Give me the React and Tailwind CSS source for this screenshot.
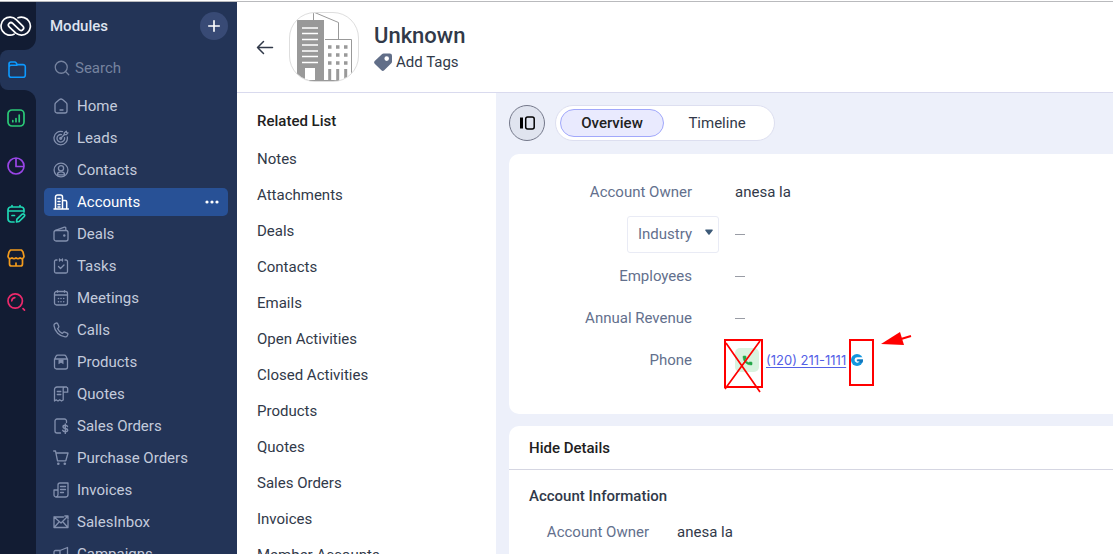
import { Phone, Plus, Search } from 'lucide-react'

const MODULES = [
  { name: 'Home', icon: HomeIcon },
  { name: 'Leads', icon: LeadsIcon },
  { name: 'Contacts', icon: ContactsIcon },
  { name: 'Accounts', icon: AccountsIcon },
  { name: 'Deals', icon: DealsIcon },
  { name: 'Tasks', icon: TasksIcon },
  { name: 'Meetings', icon: MeetingsIcon },
  { name: 'Calls', icon: CallsIcon },
  { name: 'Products', icon: ProductsIcon },
  { name: 'Quotes', icon: QuotesIcon },
  { name: 'Sales Orders', icon: SalesOrdersIcon },
  { name: 'Purchase Orders', icon: CartIcon },
  { name: 'Invoices', icon: InvoicesIcon },
  { name: 'SalesInbox', icon: InboxIcon },
  { name: 'Campaigns', icon: CampaignsIcon },
]

const RELATED = [
  'Notes', 'Attachments', 'Deals', 'Contacts', 'Emails', 'Open Activities',
  'Closed Activities', 'Products', 'Quotes', 'Sales Orders', 'Invoices', 'Member Accounts',
]

export default function App() {
  return (
    <div className="h-screen overflow-hidden flex flex-col bg-white font-['Roboto',sans-serif] text-[15px] leading-5 text-[#313949]">
      <div className="shrink-0 h-[2px] border-b border-[#b9babd]" />
      <div className="flex-1 min-h-0 flex">
        <Rail />
        <Sidebar />
        <div className="flex-1 min-w-0 flex flex-col">
          <RecordHeader />
          <div className="flex-1 min-h-0 flex">
            <RelatedList />
            <Details />
          </div>
        </div>
      </div>
    </div>
  )
}

function Rail() {
  return (
    <nav aria-label="Teamspaces" className="w-9 shrink-0 flex flex-col bg-[#233457]">
      <div className="h-12 pr-1 bg-[#121c33] rounded-br-xl flex items-center justify-center">
        <svg className="w-8 h-6" viewBox="0 0 32 24" fill="none" stroke="#fff" strokeWidth="1.7" strokeLinecap="round" strokeLinejoin="round">
          <path d="M14 20.200A9 9 0 1 1 16.200 5.600l6.600 6.500a2.500 2.500 0 0 1-3.500 3.600l-6.600-6.400a2.500 2.500 0 0 0-3.500 3.600l6.600 6.300A9 9 0 1 0 18 3.800" />
        </svg>
      </div>
      <div className="h-10 bg-[#121c33]">
        <button title="CRM" className="w-full h-full pr-[2px] rounded-l-lg bg-[#233457] flex items-center justify-center">
          <svg className="w-5 h-5" viewBox="0 0 20 20" fill="none" stroke="#0d99ff" strokeWidth="1.6" strokeLinejoin="round">
            <path d="M2 7.500V4a2 2 0 0 1 2-2h3.600c.8 0 1.200.3 1.600.9l1 1.700H16A2.300 2.300 0 0 1 18.300 7v8a2.300 2.300 0 0 1-2.300 2.300H4.300A2.300 2.300 0 0 1 2 15V7.500a2 2 0 0 1 2-2.300h6.500" />
          </svg>
        </button>
      </div>
      <div className="flex-1 bg-[#121c33] rounded-tr-xl flex flex-col items-center pt-[18px] pr-1">
        <button title="Reports" className="h-5">
          <svg className="w-5 h-5" viewBox="0 0 20 20" fill="none" stroke="#2bc977" strokeWidth="1.700" strokeLinecap="round">
            <rect x="2" y="2" width="16" height="16" rx="4" />
            <path d="M6.800 13.700v-1M10 13.700V10.500M13.200 13.700V7" />
          </svg>
        </button>
        <button title="Analytics" className="h-5 mt-7">
          <svg className="w-5 h-5" viewBox="0 0 20 20" fill="none" stroke="#9a45e8" strokeWidth="1.700" strokeLinejoin="round">
            <circle cx="10" cy="10" r="8" />
            <path d="M10 2v8.500h8" />
          </svg>
        </button>
        <button title="Planner" className="h-5 mt-7">
          <svg className="w-5 h-5" viewBox="0 0 20 20" fill="none" stroke="#1fd6b4" strokeWidth="1.700" strokeLinecap="round" strokeLinejoin="round">
            <path d="M8 18H5a3 3 0 0 1-3-3V6a3 3 0 0 1 3-3h10a3 3 0 0 1 3 3v2M2 7h16M6 1.500V3M14 1.500V3M6 11.500h2.500" />
            <path d="m10.500 18 .4-2.800 5.300-5a1.500 1.500 0 0 1 2.100 2.100l-5.200 5.200z" />
          </svg>
        </button>
        <button title="Marketplace" className="h-5 mt-6">
          <svg className="w-5 h-5" viewBox="0 0 20 20" fill="none" stroke="#f39b1d" strokeWidth="1.700" strokeLinecap="round" strokeLinejoin="round">
            <path d="M4.500 2h11l1.500 2 1 4.500a2.300 2.300 0 0 1-4 1.300 2.700 2.700 0 0 1-4 0 2.700 2.700 0 0 1-4 0 2.300 2.300 0 0 1-4-1.300L3 4z" />
            <path d="M3.500 11v5a2 2 0 0 0 2 2h9a2 2 0 0 0 2-2v-5M10 18v-3" />
          </svg>
        </button>
        <button title="Zia search" className="h-5 mt-6">
          <svg className="w-5 h-5" viewBox="0 0 20 20" fill="none" stroke="#ec2a6c" strokeWidth="1.700" strokeLinecap="round">
            <circle cx="9.200" cy="9" r="7.200" />
            <path d="M5.800 8.800a3.400 3.400 0 0 1 3-3.200M17 16.700l1.500 1.500" />
          </svg>
        </button>
      </div>
    </nav>
  )
}

function Sidebar() {
  return (
    <aside className="w-[201px] shrink-0 bg-[#233457] pt-[10px] pl-2 pr-[9px] overflow-hidden">
      <div className="h-7 flex items-center justify-between pl-[6px]">
        <h2 className="font-medium text-[#dfe4f0]">Modules</h2>
        <button title="Create module" className="w-7 h-7 rounded-full bg-[#384a75] text-white flex items-center justify-center">
          <Plus size={18} strokeWidth={2.200} />
        </button>
      </div>
      <label className="mt-[14px] h-7 flex items-center gap-1 pl-[9px] text-[#76839f]">
        <Search size={18} strokeWidth={1.700} />
        <input
          type="text"
          aria-label="Search modules"
          placeholder="Search"
          className="min-w-0 flex-1 bg-transparent outline-none placeholder:text-[#76839f]"
        />
      </label>
      <ul className="mt-[10px] flex flex-col gap-1">
        {MODULES.map(({ name, icon: Icon }) => {
          const active = name === 'Accounts'
          return (
            <li key={name} className={`h-7 rounded-[5px] flex items-center justify-between pr-2 ${active ? 'bg-[#285196]' : ''}`}>
              <a href="#" className={`flex items-center gap-2 pl-[9px] ${active ? 'text-white' : 'text-[#c3cbdc]'}`}>
                <svg
                  className={`w-4 h-4 ${active ? 'text-white' : 'text-[#8390ae]'}`}
                  viewBox="0 0 16 16" fill="none" stroke="currentColor" strokeWidth="1.300" strokeLinecap="round" strokeLinejoin="round"
                >
                  <Icon />
                </svg>
                {name}
              </a>
              {active && (
                <button title="More" className="text-white">
                  <svg className="w-4 h-4" viewBox="0 0 16 16" fill="currentColor">
                    <circle cx="3" cy="8" r="1.600" />
                    <circle cx="8" cy="8" r="1.600" />
                    <circle cx="13" cy="8" r="1.600" />
                  </svg>
                </button>
              )}
            </li>
          )
        })}
      </ul>
    </aside>
  )
}

function RecordHeader() {
  return (
    <header className="h-[91px] shrink-0 border-b border-[#d9daee] flex items-center pl-[18px]">
      <button title="Back" className="text-[#313949]">
        <svg className="w-5 h-5" viewBox="0 0 20 20" fill="none" stroke="currentColor" strokeWidth="1.500" strokeLinecap="round" strokeLinejoin="round">
          <path d="M17.500 10.500H2.500M8.500 4.500l-6 6 6 6" />
        </svg>
      </button>
      <div className="ml-[14px] w-[70px] h-[70px] rounded-[26px] border border-[#dedede] overflow-hidden">
        <Building />
      </div>
      <div className="ml-[15px] pt-[2px]">
        <h1 className="text-[22px] leading-7 font-medium">Unknown</h1>
        <button className="h-6 flex items-center gap-1">
          <svg className="w-[18px] h-[18px]" viewBox="0 0 18 18" fill="#616e88">
            <path fillRule="evenodd" d="M9.600.5h6A2.300 2.300 0 0 1 18 2.800v5.700c0 .7-.2 1.200-.7 1.700l-7.100 7.100c-.8.800-2 .800-2.800 0L.7 10.700c-.8-.8-.8-2 0-2.800L7.900 1.200C8.400.7 8.900.5 9.600.5zM12.700 3.300a2.300 2.300 0 1 0 0 4.600 2.300 2.300 0 0 0 0-4.600z" />
          </svg>
          Add Tags
        </button>
      </div>
    </header>
  )
}

function RelatedList() {
  return (
    <aside className="w-[259px] shrink-0 pt-[10px] pl-5 overflow-hidden">
      <h2 className="h-9 mb-[2px] flex items-center font-medium text-[#212121]">Related List</h2>
      <ul>
        {RELATED.map(item => (
          <li key={item} className="h-9 flex items-center">
            <a href="#">{item}</a>
          </li>
        ))}
      </ul>
    </aside>
  )
}

function Details() {
  return (
    <main className="flex-1 min-w-0 bg-[#edf0fa] pl-[13px] pt-3 overflow-hidden">
      <div className="flex items-center gap-[10px]">
        <button title="Toggle related list" className="w-9 h-9 rounded-full border border-[#74788a] bg-[#e0e4ef] flex items-center justify-center">
          <svg className="w-4 h-4" viewBox="0 0 16 16" fill="none" stroke="#000">
            <path d="M2.500 2.500v11" strokeWidth="3" />
            <rect x="6.700" y="2" width="8.500" height="12" rx="2" strokeWidth="1.500" />
          </svg>
        </button>
        <div className="h-9 flex items-center rounded-full border border-[#dddff0] bg-white px-1">
          <button className="w-[104px] h-7 rounded-full border border-[#a1a8fb] bg-[#e9eafe] font-medium text-[#212121]">Overview</button>
          <button className="w-[106px] h-7">Timeline</button>
        </div>
      </div>

      <section className="mt-[13px] h-[260px] pt-[17px] bg-white rounded-l-[10px]">
        <Field label="Account Owner">anesa la</Field>
        <div className="h-[42px] flex items-center gap-4">
          <div className="w-[210px] flex justify-end">
            <div className="relative">
              <select aria-label="Field" className="appearance-none w-[92px] h-[37px] pl-[10px] rounded-[3px] border border-[#e9ebf5] bg-white text-[#63708d]">
                <option>Industry</option>
              </select>
              <svg className="absolute right-[6px] top-[13px] w-2 h-[6px] pointer-events-none" viewBox="0 0 8 6" fill="#3d5a78">
                <path d="M.8.500h6.400c.6 0 .8.600.5 1L4.800 5.200a1 1 0 0 1-1.600 0L.3 1.500C0 1.100.2.500.8.500z" />
              </svg>
            </div>
          </div>
          <Empty />
        </div>
        <Field label="Employees"><Empty /></Field>
        <Field label="Annual Revenue"><Empty /></Field>
        <Field label="Phone"><PhoneValue /></Field>
      </section>

      <section className="mt-3 h-40 bg-white rounded-l-[10px]">
        <h2 className="h-11 pl-5 flex items-center border-b border-[#d5d6e2] font-medium text-[#212121]">Hide Details</h2>
        <h3 className="mt-4 pl-5 font-medium">Account Information</h3>
        <div className="mt-4 flex items-center gap-7">
          <span className="w-[140px] text-right text-[#63708d]">Account Owner</span>
          <span>anesa la</span>
        </div>
      </section>
    </main>
  )
}

function Field({ label, children }) {
  return (
    <div className="h-[42px] flex items-center gap-4">
      <span className="w-[210px] pr-[27px] text-right text-[#63708d]">{label}</span>
      {children}
    </div>
  )
}

function Empty() {
  return <span className="w-[10px] h-px bg-[#999ca5]" />
}

function PhoneValue() {
  return (
    <div className="relative flex items-center">
      <button title="Call" className="w-6 h-6 rounded-[5px] bg-[#d8f3df] text-[#22a747] flex items-center justify-center">
        <Phone size={11} fill="currentColor" strokeWidth={1} />
      </button>
      <a href="#" className="ml-[7px] font-['Inter',sans-serif] text-[13px] text-[#5460e6] underline underline-offset-2">(120) 211-1111</a>
      <svg className="ml-[5px] w-3 h-3" viewBox="0 0 12 12">
        <circle cx="6" cy="6" r="6" fill="#1597df" />
        <path d="M12 3.300H6.200a2.700 2.700 0 1 0 2.400 4H5.800V5.500H12z" fill="#fff" />
        <path d="M6.500 5.600H12a6 6 0 0 1-.8 3.200H8.700V7.200H6.500z" fill="#1277bd" />
      </svg>
      {/* review markup drawn over the call controls */}
      <svg className="absolute -left-3 -top-3 w-[190px] h-[62px] pointer-events-none overflow-visible" viewBox="0 0 190 62" fill="none" stroke="#f00" strokeWidth="2">
        <rect x="2" y="4" width="37" height="47" />
        <path d="M3 7l34 49M37 5L2 53" strokeWidth="1.700" />
        <rect x="127" y="4" width="23" height="45" />
        <path d="M188 0l-10 3" />
        <path d="M158 8l19-12 4 13z" fill="#f00" stroke="none" />
      </svg>
    </div>
  )
}

function Building() {
  return (
    <svg className="w-full h-full" viewBox="1 1 68 68">
      <path d="M24.500 8V0L49.500 10.500V27.500M36 27.500h26.500V70" fill="none" stroke="#999" />
      <path d="M8 8h27v62H8z" fill="#999" />
      <path d="M13 16h16M13 21.500h16M13 27.500h16M13 33h16M13 39h16M13 44.500h16M13 50.500h16" stroke="#fff" strokeWidth="1.500" />
      <path d="M16 56h10v12H16z" fill="#fff" />
      <path d="M39 35h20M39 43h20M39 51h20" stroke="#999" strokeWidth="3.500" strokeDasharray="3.500 4.500" />
      <path d="M40.700 57v12M48.700 57v12M56.700 57v12" stroke="#999" strokeWidth="3" />
      <path d="M8 68.500h55" stroke="#999" />
    </svg>
  )
}

function HomeIcon() {
  return <path d="M2 6.500a2.500 2.500 0 0 1 1-2l3.500-2.900a2.500 2.500 0 0 1 3 0L13 4.500a2.500 2.500 0 0 1 1 2V13a2 2 0 0 1-2 2H4a2 2 0 0 1-2-2zM7 12h3" />
}

function LeadsIcon() {
  return (
    <>
      <path d="M9.500 1.700A6.700 6.700 0 1 0 14.300 7M8.500 4.600a3.800 3.800 0 1 0 3 3M7.700 8.300l3.800-3.800" />
      <circle cx="7.700" cy="8.300" r="1" />
      <path d="M11.300 4.700V3l2-1.800.3 1.300 1.400.4-1.800 1.800z" />
    </>
  )
}

function ContactsIcon() {
  return (
    <>
      <circle cx="8" cy="8" r="6.900" />
      <circle cx="8" cy="6.200" r="2.600" />
      <path d="M4.500 13.500v-1.300c0-1.500 1.500-2.400 3.500-2.400s3.500.9 3.500 2.400v1.300M5.200 12.800h5.600" />
    </>
  )
}

function AccountsIcon() {
  return <path strokeWidth="1.500" d="M1 15h14.500M2.500 15V3a2 2 0 0 1 2-2h3a2 2 0 0 1 2 2v12M9.500 6.500h2.700a1.500 1.500 0 0 1 1.500 1.500v7M5 4.500h2M5 7.500h2M5 10.500h2M5 13h2" />
}

function DealsIcon() {
  return (
    <>
      <rect x="1" y="4.500" width="14" height="10.500" rx="2" />
      <path d="M2.500 4.300l9-3.100a1 1 0 0 1 1.300 1v2" />
      <circle cx="11.300" cy="9.500" r="1.200" fill="currentColor" stroke="none" />
    </>
  )
}

function TasksIcon() {
  return <path d="M4 2H3a1.500 1.500 0 0 0-1.500 1.500v10A1.500 1.500 0 0 0 3 15h10a1.500 1.500 0 0 0 1.500-1.500v-10A1.500 1.500 0 0 0 13 2h-1M6.500 2h3M6.500 1v2M9.500 1v2M5.500 8.500l2 2 3.500-3.500" />
}

function MeetingsIcon() {
  return (
    <>
      <rect x="1.500" y="1.500" width="13" height="13.500" rx="2" />
      <path d="M1.500 5h13M4.500.700v1.500M11.500.700v1.500" />
      <path strokeWidth="1.600" d="M5.500 8.500h.01M8 8.500h.01M10.700 8.500h.01M5.500 11.700h.01M8 11.700h.01M10.700 11.700h.01" />
    </>
  )
}

function CallsIcon() {
  return <path d="M2 1.700l1.200-.6c.6-.3 1.200 0 1.500.6l1.100 2.500c.2.600.1 1-.3 1.400l-1 1c.9 2 2.500 3.700 4.700 4.800l1.100-1c.4-.4.8-.5 1.400-.3l2.500 1c.7.3.9.900.6 1.500l-.5 1.100c-.4.900-1.200 1.300-2.200 1.200C6.500 14.500 1.700 9.500 1 3.700c-.1-.9.200-1.600 1-2z" />
}

function ProductsIcon() {
  return (
    <>
      <path d="M1.500 5.500L3 2.300A2 2 0 0 1 4.800 1.200h6.400A2 2 0 0 1 13 2.300l1.500 3.200V13a2 2 0 0 1-2 2h-9a2 2 0 0 1-2-2zM1.500 5h13" />
      <path d="M5.500 5.500h5v4.800L8 8.700l-2.500 1.600z" fill="currentColor" stroke="none" />
    </>
  )
}

function QuotesIcon() {
  return <path d="M13.500 1H4a2.500 2.500 0 0 0-2.500 2.500V15l1.700-1.200L5 15l1.700-1.200L8.500 15l1.700-1V3A1.700 1.700 0 0 1 12 1h1a1.700 1.700 0 0 1 1.700 1.700v3.500h-4.500M4.300 5.500h3.500M4.300 8.500h3.500" />
}

function SalesOrdersIcon() {
  return (
    <>
      <path d="M13.500 4.500V3a2 2 0 0 0-2-2H4a2 2 0 0 0-2 2v10a2 2 0 0 0 2 2h3.500" />
      <path strokeWidth="1.400" d="M14.500 8.500c-.3-.9-1.200-1.200-2.300-1.200s-2.200.5-2.200 1.600c0 2.300 4.700 1 4.700 3.200 0 1.200-1.200 1.700-2.400 1.700S10 13.300 9.700 12.300M12.300 6v9.500" />
    </>
  )
}

function CartIcon() {
  return (
    <>
      <path d="M.7 1h1.800l2 9.800h8.300L15 3H3" />
      <circle cx="5.300" cy="13.800" r="1.300" fill="currentColor" stroke="none" />
      <circle cx="11.800" cy="13.800" r="1.300" fill="currentColor" stroke="none" />
    </>
  )
}

function InvoicesIcon() {
  return <path d="M5 12.500V3a2 2 0 0 1 2-2h8v11.500A2.500 2.500 0 0 1 12.500 15H3a2 2 0 0 1-2-2V8h4v4.500A2.500 2.500 0 0 1 3 15M7.500 4.500h5M7.500 7.500h5M7.500 10.500h3" />
}

function InboxIcon() {
  return <path d="M10.500 3H1v10.500h14V6.500M1 3l7 6 6.500-6.500M11.800 2H15v3M1.300 13.200l4.500-5M14.700 13.200l-4.500-5" />
}

function CampaignsIcon() {
  return <path d="M14.500 1.500L7 4.500H2.500A1.500 1.500 0 0 0 1 6v3.500A1.500 1.500 0 0 0 2.500 11H7l7.500 3zM4 11v3.500h3V11M7 4.500V11" />
}
